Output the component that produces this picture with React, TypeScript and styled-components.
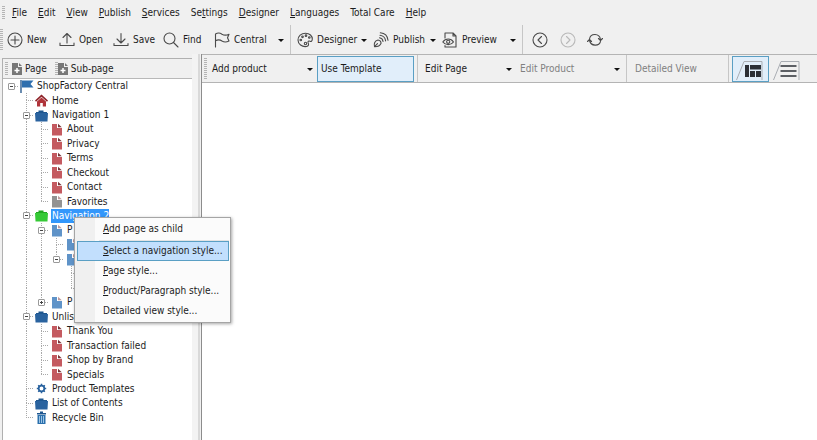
import React from "react";
import styled, { createGlobalStyle, css } from "styled-components";

const GlobalStyle = createGlobalStyle`
  *, *::before, *::after { box-sizing: border-box; }
  body { margin: 0; background: #f0f0f0; }
  body, button { font: 10px/14px "DejaVu Sans Condensed", "Noto Sans", sans-serif; color: #1c1c1c; }
  button { margin: 0; padding: 0; border: 0; background: none; text-align: left; white-space: nowrap; }
  ul { margin: 0; padding: 0; list-style: none; }
  svg { display: block; flex: none; }
`;

/* ---------- layout ---------- */

const Page = styled.div`
  min-height: 100vh;
  display: flex;
  flex-direction: column;
`;

const MenuBar = styled.nav`
  display: flex;
  gap: 11px;
  height: 25px;
  align-items: center;
  padding-left: 2px;
`;

const Grip = styled.span<{ $tall?: boolean; $gap?: number }>`
  flex: none;
  width: 3px;
  height: ${(p) => (p.$tall ? 22 : 14)}px;
  margin-right: ${(p) => p.$gap ?? 0}px;
  background: repeating-linear-gradient(#b4b4b4 0 1px, transparent 1px 2px);
`;

const MenuBarItem = styled.button`
  &:first-of-type { margin-left: -4px; }
`;

const ToolBar = styled.div`
  display: flex;
  align-items: center;
  height: 29px;
`;

const Tool = styled.button<{ $w: number }>`
  display: flex;
  align-items: center;
  gap: 4px;
  flex: none;
  width: ${(p) => p.$w}px;
  height: 26px;
  color: #1c1c1c;
`;

const Caret = styled.span<{ $end?: number }>`
  width: 6px;
  margin: 2px ${(p) => p.$end ?? 6}px 0 auto;
  border: solid transparent;
  border-width: 3px 3px 0;
  border-top-color: #111;
`;

const Divider = styled.span<{ $before?: number; $after: number }>`
  flex: none;
  width: 1px;
  align-self: stretch;
  margin: 0 ${(p) => p.$after}px 0 ${(p) => p.$before ?? 0}px;
  background: #c6c6c6;
`;

const Body = styled.div`
  flex: 1;
  display: grid;
  grid-template-columns: 192px 10px minmax(0, 1fr);
`;

const Sidebar = styled.aside`
  display: flex;
  flex-direction: column;
  margin: 4px 0 0 2px;
  border: solid #b0b0b0;
  border-width: 1px 0 0 1px;
`;

const SidebarBar = styled.div`
  display: flex;
  align-items: center;
  height: 20px;
  padding: 1px 0 0 2px;
  border-bottom: 1px solid #b8b8b8;
`;

const PageButton = styled.button`
  display: flex;
  align-items: center;
  gap: 3px;
  margin: 0 8px 0 4px;
  & + ${Grip} + & { margin-left: 0; }
`;

const Splitter = styled.div`
  border-right: 1px solid #8c8c8c;
  background: linear-gradient(90deg, #f3f3f3 0 6px, #d9d9d9 6px 8px, #f0f0f0 8px);
`;

const Workspace = styled.main`
  display: flex;
  flex-direction: column;
  background: #fff;
`;

const EditBar = styled.div`
  display: flex;
  align-items: center;
  height: 29px;
  padding-left: 2px;
  background: #f0f0f0;
  border: solid #b4b4b4;
  border-width: 1px 0;
`;

const EditButton = styled.button<{ $w: number; $on?: boolean }>`
  display: flex;
  align-items: center;
  flex: none;
  width: ${(p) => p.$w}px;
  height: 26px;
  padding-left: ${(p) => (p.$on ? 3 : 4)}px;
  &:disabled { color: #808080; }
  ${(p) =>
    p.$on &&
    css`
      background: #e1eefa;
      border: 1px solid #5a9fc4;
    `}
`;

const ViewTab = styled(EditButton)`
  padding: 3px 0 0 ${(p) => (p.$on ? 1 : 2)}px;
`;

/* ---------- tree ---------- */

const TreeList = styled.ul`
  flex: 1;
  background: #fff;
`;

const TreeRows = styled.div`
  display: grid;
  grid-auto-rows: 1fr;
  min-height: 346px;
`;

const TreeRow = styled.li`
  display: flex;
  align-items: center;
  min-height: 14px;
  padding-left: 1px;
`;

const vertical = "repeating-linear-gradient(#a9a9a9 0 1px, transparent 1px 2px)";
const horizontal = "repeating-linear-gradient(90deg, #a9a9a9 0 1px, transparent 1px 2px)";

const GuideCell = styled.span<{ $up?: boolean; $down?: boolean; $branch?: boolean }>`
  flex: none;
  align-self: stretch;
  width: 15px;
  display: grid;
  place-items: center;
  background-repeat: no-repeat;
  background-image: ${(p) =>
    [p.$up ? vertical : "none", p.$down ? vertical : "none", p.$branch ? horizontal : "none"].join(", ")};
  background-position: 7px 0, 7px 100%, 7px 50%;
  background-size: 1px 52%, 1px 52%, 8px 1px;
`;

const Expander = styled.button`
  width: 7px;
  height: 7px;
  border: 1px solid #9a9a9a;
  border-radius: 1px;
  background: #fff;
  display: grid;
  place-items: center;
`;

const IconSlot = styled.span`
  flex: none;
  width: 18px;
  padding-left: 1px;
`;

const Label = styled.span<{ $selected?: boolean }>`
  position: relative;
  white-space: nowrap;
  ${(p) =>
    p.$selected &&
    css`
      color: #fff;
      background: #3397fb;
      box-shadow: -1px 0 #3397fb;
    `}
`;

/* ---------- context menu ---------- */

const ContextMenu = styled.div`
  position: absolute;
  z-index: 5;
  top: 8px;
  left: 22px;
  width: 157px;
  padding: 1px 1px 1px 2px;
  display: flex;
  flex-direction: column;
  border: 1px solid #a5a5a5;
  background: linear-gradient(90deg, #f0f0f0 0 20px, #fbfbfb 20px);
  box-shadow: 1px 1px 3px rgba(0, 0, 0, 0.35);
`;

const ContextItem = styled.button<{ $hot?: boolean }>`
  height: 20px;
  padding-left: 25px;
  border: 1px solid ${(p) => (p.$hot ? "#5a9fc4" : "transparent")};
  background: ${(p) => (p.$hot ? "#c2dffd" : "none")};
`;

const ContextRule = styled.span`
  height: 1px;
  margin: 1px 0 0 22px;
  background: #e4e4e4;
`;

/* ---------- icons ---------- */

const Line = ({ children, color = "#4a4a4a" }: { children: React.ReactNode; color?: string }) => (
  <svg width="16" height="16" viewBox="0 0 16 16" fill="none" stroke={color} strokeWidth="1.1" strokeLinecap="round" strokeLinejoin="round">
    {children}
  </svg>
);

const PlusIcon = () => <Line><circle cx="8" cy="8" r="7" /><path d="M8 4v8M4 8h8" /></Line>;
const OpenIcon = () => <Line><path d="M8 11V1.500M4 5.500l4-4 4 4M1 11v2.500h14V11" /></Line>;
const SaveIcon = () => <Line><path d="M8 1.500V10.500M4 7l4 4 4-4M1 11.500v2h14v-2" /></Line>;
const FindIcon = () => <Line><circle cx="6.500" cy="6.500" r="5.500" /><path d="M10.500 10.500l4.500 4.500" /></Line>;
const FlagLineIcon = () => (
  <Line><path d="M1.500 15V2c2-1.200 4.500-1.200 6.500.2 2 1.200 4.500 1.200 7 0l-1.500 3.500 1.500 3.300c-2.500 1.200-5 1.200-7 0-2-1.300-4.500-1.300-6.500-.2" /></Line>
);
const PaletteIcon = () => (
  <Line>
    <path d="M9.500 14.500C5 15.200 1 12 1 8s3.200-6.800 7.500-6.800S15.300 4 15.300 7c0 2.300-1.300 2.800-2.300 2.200-1.300-.7-2.500.2-1.800 1.800.8 1.600.3 3-1.700 3.500z" />
    <circle cx="3.800" cy="8" r=".8" /><circle cx="5.500" cy="4.800" r=".8" /><circle cx="9" cy="3.700" r=".8" /><circle cx="12.300" cy="5.500" r=".8" />
    <circle cx="8.500" cy="11.500" r="1.200" />
  </Line>
);
const PublishIcon = () => (
  <Line>
    <path d="M1.500 14.700c-.8-3 .2-6 3.500-6.700 2 .2 3.200 1.700 3 3.500-1.300 2.700-3.500 3.300-6.500 3.200zM1.500 14.700l3-3" />
    <path d="M6.500 5.800c2 .3 3.300 1.700 3.500 3.700M7 3.300c3 .4 5.200 2.400 5.600 5.600M7.300.8c4.300.4 7.300 3.200 7.700 7.500" />
  </Line>
);
const PreviewIcon = () => (
  <Line>
    <path d="M3 6V1h8l3 3v11H3v-1.500M11 1v3h3" />
    <path d="M.8 10c2.800-4 8.200-4 10.700 0-2.500 3.500-8 3.500-10.700 0z" fill="#f0f0f0" /><circle cx="6.200" cy="9.800" r="1.600" />
  </Line>
);
const BackIcon = () => <Line><circle cx="8" cy="8" r="7" /><path d="M9.500 4.500L6 8l3.500 3.500" /></Line>;
const ForwardIcon = () => <Line color="#b9b9b9"><circle cx="8" cy="8" r="7" /><path d="M6.500 4.500L10 8l-3.500 3.500" /></Line>;
const RefreshIcon = () => (
  <Line><path d="M2.500 7C3.500 1 12.500 1 13.500 7.500M13.500 9.500c-1.500 5-9.500 5-11-1M11.500 6.500l2 2 2-2M.5 9.500l2-2 2 2" /></Line>
);

const AddPageIcon = () => (
  <svg width="10" height="12" viewBox="0 0 10 12">
    <path d="M0 0h6v4h4v8H0z" fill="#777" /><path d="M7 0l3 3H7z" fill="#777" />
    <path d="M5 5v5M2.500 7.500h5" stroke="#fff" strokeWidth="1.500" />
  </svg>
);

const LayoutTabIcon = () => (
  <svg width="30" height="20" viewBox="0 0 30 20">
    <path d="M2.500 20L10 1.500h18V20" fill="none" stroke="#a9adb3" />
    <path d="M11 5h4v12h-4zM16 5h11v4.500H16zM16 11h5v6h-5zM22 11h5v6h-5z" fill="#2b2f36" />
  </svg>
);
const ListTabIcon = () => (
  <svg width="30" height="20" viewBox="0 0 30 20">
    <path d="M2.500 20L10 1.500h18V20" fill="none" stroke="#a9adb3" />
    <path d="M9.500 6h16M9.500 11h16M9.500 16h16" stroke="#2b2f36" strokeWidth="1.700" />
  </svg>
);

type Kind = "flag" | "home" | "folder" | "green" | "red" | "gray" | "blue" | "gear" | "bin";

const fileColors: Partial<Record<Kind, string>> = { red: "#c45a60", gray: "#929292", blue: "#5f93c8" };

function TreeIcon({ kind }: { kind: Kind }) {
  if (kind === "flag")
    return (
      <svg width="14" height="13" viewBox="0 0 14 13">
        <path d="M1 0v13" stroke="#1d4f86" strokeWidth="1.300" /><path d="M2 .5h11.500L10.500 4l3 3.500H2z" fill="#2f6fae" />
      </svg>
    );
  if (kind === "home")
    return (
      <svg width="13" height="13" viewBox="0 0 13 13">
        <path d="M6.500.5L0 6.500l1 1.200 5.500-5 5.500 5 1-1.200z" fill="#8e2329" />
        <path d="M6.500 3.500L2 7.500v5h3.200V9h2.600v3.500H11v-5z" fill="#b0343a" />
      </svg>
    );
  if (kind === "folder" || kind === "green") {
    const dark = kind === "green" ? "#22a822" : "#1f5790";
    const light = kind === "green" ? "#36c936" : "#2a639f";
    return (
      <svg width="13" height="13" viewBox="0 0 13 13">
        <path d="M1 3h2.500V1.500h5V3H12v2H1z" fill={dark} /><path d="M0 4h13l-.5 8.500H.5z" fill={light} />
      </svg>
    );
  }
  if (kind === "gear")
    return (
      <svg width="13" height="13" viewBox="0 0 13 13" fill="none" stroke="#2a639f">
        <circle cx="6.500" cy="6.500" r="2.800" strokeWidth="1.700" />
        <path d="M6.500 1.800v2M6.500 9.200v2M1.800 6.500h2M9.200 6.500h2M3.200 3.200l1.300 1.300M8.500 8.500l1.300 1.300M9.800 3.200L8.500 4.500M4.500 8.500L3.200 9.800" strokeWidth="1.500" />
      </svg>
    );
  if (kind === "bin")
    return (
      <svg width="13" height="13" viewBox="0 0 13 13">
        <path d="M2 2h9v1.500H2zM5 .5h3V2H5z" fill="#1f5790" /><path d="M2.500 4h8v9h-8z" fill="#2a70ad" />
        <path d="M4.500 5v7M6.500 5v7M8.500 5v7" stroke="#a9cdea" strokeWidth=".9" />
      </svg>
    );
  return (
    <svg width="12" height="13" viewBox="0 0 12 13">
      <path d="M2 1h5v4h5v7.500H2z" fill={fileColors[kind]} />
      <path d="M8 .8L11.800 4.200H8z" fill="#7a3438" fillOpacity={kind === "red" ? 1 : 0.5} />
    </svg>
  );
}

/* ---------- data ---------- */

type Node = { level: number; kind: Kind; label: string; state?: "open" | "closed"; selected?: boolean };

const nodes: Node[] = [
  { level: 0, kind: "flag", label: "ShopFactory Central", state: "open" },
  { level: 1, kind: "home", label: "Home" },
  { level: 1, kind: "folder", label: "Navigation 1", state: "open" },
  { level: 2, kind: "red", label: "About" },
  { level: 2, kind: "red", label: "Privacy" },
  { level: 2, kind: "red", label: "Terms" },
  { level: 2, kind: "red", label: "Checkout" },
  { level: 2, kind: "red", label: "Contact" },
  { level: 2, kind: "gray", label: "Favorites" },
  { level: 1, kind: "green", label: "Navigation 2", state: "open", selected: true },
  { level: 2, kind: "blue", label: "P", state: "open" },
  { level: 3, kind: "blue", label: "" },
  { level: 3, kind: "blue", label: "", state: "open" },
  { level: 4, kind: "blue", label: "" },
  { level: 4, kind: "blue", label: "" },
  { level: 2, kind: "blue", label: "P", state: "closed" },
  { level: 1, kind: "folder", label: "Unlisted", state: "open" },
  { level: 2, kind: "red", label: "Thank You" },
  { level: 2, kind: "red", label: "Transaction failed" },
  { level: 2, kind: "red", label: "Shop by Brand" },
  { level: 2, kind: "red", label: "Specials" },
  { level: 1, kind: "gear", label: "Product Templates" },
  { level: 1, kind: "folder", label: "List of Contents" },
  { level: 1, kind: "bin", label: "Recycle Bin" },
];

const continues = (index: number, level: number) => {
  for (const next of nodes.slice(index + 1)) {
    if (next.level < level) return false;
    if (next.level === level) return true;
  }
  return false;
};

const menus = ["_File", "_Edit", "_View", "_Publish", "_Services", "Se_ttings", "_Designer", "_Languages", "Total Care", "_Help"];

/* The letter after an underscore is the access key and is underlined. */
function Access({ text }: { text: string }) {
  const at = text.indexOf("_");
  if (at < 0) return <>{text}</>;
  return <>{text.slice(0, at)}<u>{text[at + 1]}</u>{text.slice(at + 2)}</>;
}

function NavigationMenu() {
  return (
    <ContextMenu role="menu">
      <ContextItem role="menuitem"><Access text="_Add page as child" /></ContextItem>
      <ContextRule />
      <ContextItem role="menuitem" $hot><Access text="_Select a navigation style..." /></ContextItem>
      <ContextItem role="menuitem"><Access text="_Page style..." /></ContextItem>
      <ContextItem role="menuitem"><Access text="_Product/Paragraph style..." /></ContextItem>
      <ContextItem role="menuitem">Detailed view style...</ContextItem>
    </ContextMenu>
  );
}

function TreeItem({ node, index }: { node: Node; index: number }) {
  return (
    <TreeRow role="treeitem" aria-level={node.level + 1} aria-selected={!!node.selected}>
      {Array.from({ length: node.level }, (_, level) => {
        const on = level > 0 && continues(index, level);
        return <GuideCell key={level} $up={on} $down={on} />;
      })}
      <GuideCell $up={node.level > 0} $down={continues(index, node.level)} $branch>
        {node.state && (
          <Expander aria-label={node.state === "open" ? "Collapse" : "Expand"}>
            <svg width="5" height="5" viewBox="0 0 5 5">
              <path d={node.state === "open" ? "M1 2.500h3" : "M1 2.500h3M2.500 1v3"} stroke="#444" />
            </svg>
          </Expander>
        )}
      </GuideCell>
      <IconSlot><TreeIcon kind={node.kind} /></IconSlot>
      <Label $selected={node.selected}>
        {node.label}
        {node.selected && <NavigationMenu />}
      </Label>
    </TreeRow>
  );
}

export default function App() {
  return (
    <Page>
      <GlobalStyle />
      <MenuBar>
        <Grip />
        {menus.map((m) => <MenuBarItem key={m}><Access text={m} /></MenuBarItem>)}
      </MenuBar>
      <ToolBar>
        <Grip $tall $gap={4} />
        <Tool $w={52}><PlusIcon />New</Tool>
        <Tool $w={54}><OpenIcon />Open</Tool>
        <Tool $w={50}><SaveIcon />Save</Tool>
        <Tool $w={51}><FindIcon />Find</Tool>
        <Tool $w={76}><FlagLineIcon />Central<Caret /></Tool>
        <Divider $after={6} />
        <Tool $w={76}><PaletteIcon />Designer<Caret /></Tool>
        <Tool $w={69}><PublishIcon />Publish<Caret /></Tool>
        <Tool $w={80}><PreviewIcon />Preview<Caret /></Tool>
        <Divider $after={9} />
        <Tool $w={28} aria-label="Back"><BackIcon /></Tool>
        <Tool $w={27} aria-label="Forward" disabled><ForwardIcon /></Tool>
        <Tool $w={28} aria-label="Refresh"><RefreshIcon /></Tool>
      </ToolBar>
      <Body>
        <Sidebar>
          <SidebarBar>
            <Grip />
            <PageButton><AddPageIcon />Page</PageButton>
            <Grip />
            <PageButton><AddPageIcon />Sub-page</PageButton>
          </SidebarBar>
          <TreeList role="tree">
            <TreeRows role="presentation">
              {nodes.map((node, i) => <TreeItem key={i} node={node} index={i} />)}
            </TreeRows>
          </TreeList>
        </Sidebar>
        <Splitter />
        <Workspace>
          <EditBar>
            <Grip $tall $gap={1} />
            <EditButton $w={109}>Add product<Caret $end={4} /></EditButton>
            <EditButton $w={97} $on>Use Template</EditButton>
            <Divider $before={3} $after={3} />
            <EditButton $w={95}>Edit Page<Caret $end={4} /></EditButton>
            <EditButton $w={108} disabled>Edit Product<Caret $end={4} /></EditButton>
            <Divider $before={2} $after={4} />
            <EditButton $w={97} disabled>Detailed View</EditButton>
            <Divider $after={3} />
            <ViewTab $w={37} $on aria-label="Layout view"><LayoutTabIcon /></ViewTab>
            <ViewTab $w={37} aria-label="List view"><ListTabIcon /></ViewTab>
          </EditBar>
        </Workspace>
      </Body>
    </Page>
  );
}
